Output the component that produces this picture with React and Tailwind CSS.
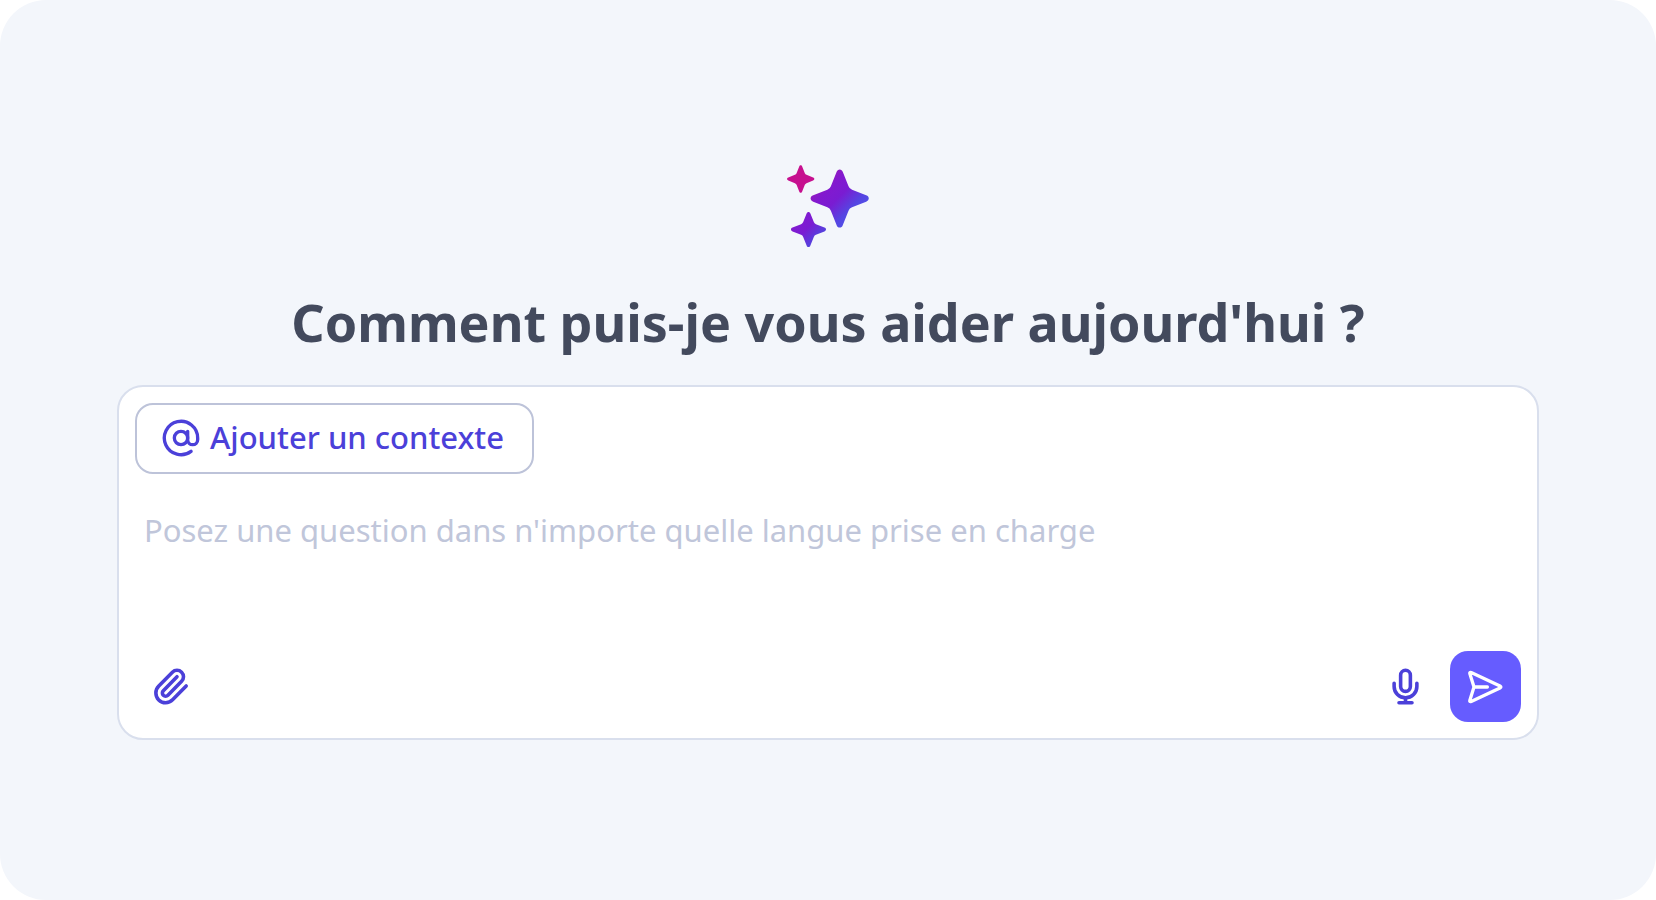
import { useState } from "react";

// ================================
// Icons
// ================================
const Icon = ({ children, strokeWidth = 2.2, className = "size-[39px]" }) => (
  <svg
    viewBox="0 0 24 24"
    fill="none"
    stroke="currentColor"
    strokeWidth={strokeWidth}
    strokeLinecap="round"
    strokeLinejoin="round"
    className={`${className} shrink-0`}
    aria-hidden="true"
  >
    {children}
  </svg>
);

const AtIcon = () => (
  <Icon strokeWidth={2} className="size-10">
    <circle cx="12" cy="12" r="4" />
    <path d="M16 8v5a3 3 0 0 0 6 0v-1a10 10 0 1 0-4 8" />
  </Icon>
);

const PaperclipIcon = () => (
  <Icon>
    <path d="m16 6-8.414 8.586a2 2 0 0 0 2.829 2.829l8.414-8.586a4 4 0 1 0-5.657-5.657l-8.379 8.551a6 6 0 1 0 8.485 8.485l8.379-8.551" />
  </Icon>
);

const MicIcon = () => (
  <Icon>
    <rect x="9" y="2" width="6" height="13" rx="3" />
    <path d="M19 10v2a7 7 0 0 1-14 0v-2" />
    <path d="M12 19v3M8 22h8" />
  </Icon>
);

const SendIcon = () => (
  <svg
    viewBox="0 0 40 40"
    fill="none"
    stroke="currentColor"
    strokeWidth="3.3"
    strokeLinecap="round"
    strokeLinejoin="round"
    className="size-10 shrink-0"
    aria-hidden="true"
  >
    <path d="M8 20 3.8 6.6Q3.4 4.8 5.2 5.5L34 18.9Q35.8 20 34 21L5.2 34.5Q3.4 35.2 3.8 33.4ZH21.4" />
  </svg>
);

// Four-pointed star, 60 units wide, centred on the origin
const STAR =
  "M-3.2-27C-2.2-30.6 2.2-30.6 3.2-27L9-12.6Q10-10 12.6-9L27-3.2C30.6-2.2 30.6 2.2 27 3.2L12.6 9Q10 10 9 12.6L3.2 27C2.2 30.6-2.2 30.6-3.2 27L-9 12.6Q-10 10-12.6 9L-27 3.2C-30.6 2.2-30.6-2.2-27-3.2L-12.6-9Q-10-10-9-12.6Z";

const Sparkles = () => (
  <svg viewBox="0 0 92 92" className="size-[92px]" aria-hidden="true">
    <defs>
      <linearGradient id="big" gradientUnits="userSpaceOnUse" x1="-20" y1="-20" x2="18" y2="18">
        <stop offset="0" stopColor="#9a18b8" />
        <stop offset="0.25" stopColor="#8219cf" />
        <stop offset="0.5" stopColor="#7a1cd2" />
        <stop offset="0.8" stopColor="#5545e2" />
        <stop offset="1" stopColor="#5052e8" />
      </linearGradient>
      <linearGradient id="small" gradientUnits="userSpaceOnUse" x1="-20" y1="-20" x2="20" y2="20">
        <stop offset="0" stopColor="#831ad0" />
        <stop offset="0.45" stopColor="#7a1cd2" />
        <stop offset="0.8" stopColor="#5a3cdc" />
        <stop offset="1" stopColor="#5146df" />
      </linearGradient>
    </defs>
    <path d={STAR} transform="translate(18.7 19) scale(.46)" fill="#c6108f" />
    <path d={STAR} transform="translate(57.7 38.5) scale(.98)" fill="url(#big)" />
    <path d={STAR} transform="translate(26.5 69.5) scale(.59)" fill="url(#small)" />
  </svg>
);

export default function App() {
  const [question, setQuestion] = useState("");

  return (
    <div className="bg-white font-['Noto_Sans',sans-serif]">
      <main className="min-h-screen flex flex-col items-center justify-center px-[117px] rounded-[46px] bg-[#f3f6fb]">

        {/* Header */}
        <Sparkles />
        <h1 className="mt-[38px] text-[52px] leading-[64px] font-bold text-center text-[#434a5d]">
          Comment puis-je vous aider aujourd'hui ?
        </h1>

        {/* Prompt */}
        <form
          onSubmit={(e) => e.preventDefault()}
          className="mt-[31px] w-full flex flex-col p-4 rounded-[26px] border-2 border-[#d9dfed] bg-white"
        >
          <button
            type="button"
            className="self-start h-[71px] flex items-center gap-[9px] pl-6 pr-7 pb-[2px] rounded-[18px] border-2 border-[#bdc3d9] text-[31px] font-medium text-[#4b40d9]"
          >
            <AtIcon />
            Ajouter un contexte
          </button>

          <textarea
            rows={3}
            value={question}
            onChange={(e) => setQuestion(e.target.value)}
            aria-label="Question"
            placeholder="Posez une question dans n'importe quelle langue prise en charge"
            className="mt-[19px] w-full px-[9px] py-4 resize-none outline-none text-[31px] leading-[42px] text-[#434a5d] placeholder:text-[#c0c6da]"
          />

          <div className="flex items-center gap-[9px] text-[#4b40d9]">
            <button
              type="button"
              aria-label="Joindre un fichier"
              className="size-[71px] flex items-center justify-center mr-auto"
            >
              <PaperclipIcon />
            </button>
            <button
              type="button"
              aria-label="Dicter"
              className="size-[71px] flex items-center justify-center"
            >
              <MicIcon />
            </button>
            <button
              type="submit"
              aria-label="Envoyer"
              className="size-[71px] flex items-center justify-center rounded-[18px] bg-[#665cff] text-white"
            >
              <SendIcon />
            </button>
          </div>
        </form>

      </main>
    </div>
  );
}
